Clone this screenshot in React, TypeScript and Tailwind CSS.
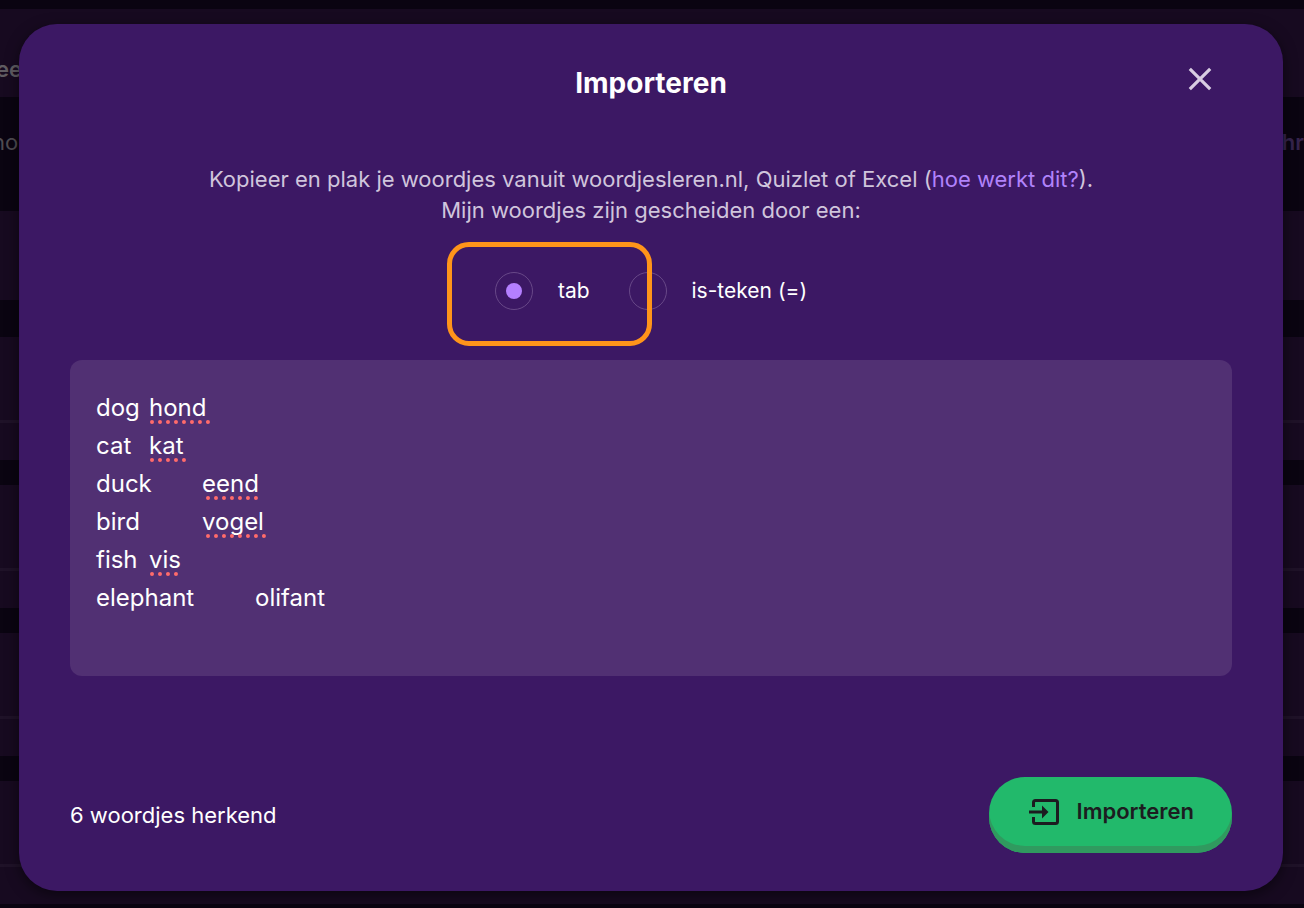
import { useState } from "react";

const initialText =
  "dog\thond\ncat\tkat\nduck\teend\nbird\t\tvogel\nfish\tvis\nelephant\t\tolifant\n";

// Spelling marks under unknown words, one entry per line of the text box.
const spellingMarks: ({ left: number; width: number } | null)[] = [
  { left: 54, width: 60 },
  { left: 54, width: 36 },
  { left: 110, width: 52 },
  { left: 110, width: 60 },
  { left: 54, width: 28 },
  null,
];

function WordCard() {
  return (
    <div className="mb-[25px] h-[123px] w-full shrink-0 bg-[#170a20] pt-[83px]">
      <div className="h-[3px] bg-[#1f1228]" />
    </div>
  );
}

function Backdrop() {
  return (
    <div
      aria-hidden="true"
      className="absolute inset-0 flex flex-col overflow-hidden bg-[#0a0411] pt-[9px]"
    >
      <div className="flex h-[88px] shrink-0 items-center bg-[#170a20] pt-8">
        <span className="-ml-1 text-[22px] leading-[30px] font-semibold text-[#605c62]">ee</span>
      </div>
      <div className="flex h-[114px] shrink-0 items-start justify-between pt-[30px] text-[22px] leading-[30px]">
        <span className="-ml-2 text-[#4f4c52]">no</span>
        <span className="font-semibold text-[#35244d]">hr</span>
      </div>
      <div className="mb-[37px] h-[89px] shrink-0 bg-[#170a20]" />
      <WordCard />
      <WordCard />
      <WordCard />
      <WordCard />
    </div>
  );
}

function SeparatorOption({
  label,
  value,
  selected,
  onSelect,
}: {
  label: string;
  value: string;
  selected: string;
  onSelect: (value: string) => void;
}) {
  return (
    <label className="flex cursor-pointer items-center gap-[25px]">
      <input
        type="radio"
        name="separator"
        value={value}
        checked={selected === value}
        onChange={() => onSelect(value)}
        className="grid size-[38px] appearance-none place-items-center rounded-full border border-[#684888] before:size-4 before:rounded-full before:bg-transparent checked:before:bg-[#b47fff]"
      />
      {label}
    </label>
  );
}

export default function App() {
  const [separator, setSeparator] = useState("tab");
  const [text, setText] = useState(initialText);
  const count = text.split("\n").filter((line) => line.trim() !== "").length;

  return (
    <div className="relative min-h-screen overflow-hidden pt-6 pr-[21px] pb-[17px] pl-[19px] font-[Inter,sans-serif]">
      <Backdrop />
      <main
        role="dialog"
        aria-labelledby="dialog-title"
        className="relative flex flex-col rounded-[38px] bg-[#3c1864] px-[51px] pt-[38px] pb-[38px] text-white shadow-[0_4px_14px_rgba(0,0,0,0.5)]"
      >
        <header className="grid grid-cols-[1fr_auto_1fr] items-center">
          <h1 id="dialog-title" className="col-start-2 text-[28px] leading-[42px] font-bold">
            Importeren
          </h1>
          <button type="button" aria-label="Sluiten" className="mr-5 mb-2 justify-self-end text-[#d8cde2]">
            <svg viewBox="0 0 24 24" className="size-6" fill="none" stroke="currentColor" strokeWidth="3.2">
              <path d="M1.800 1.800 22.200 22.200M22.200 1.800 1.800 22.200" />
            </svg>
          </button>
        </header>

        <p className="mt-[60px] text-center text-[22px] leading-[31px] text-[#d0c5dc]">
          Kopieer en plak je woordjes vanuit woordjesleren.nl, Quizlet of Excel (
          <a href="#uitleg" className="text-[#b183fb]">
            hoe werkt dit?
          </a>
          ).
          <br />
          Mijn woordjes zijn gescheiden door een:
        </p>

        <fieldset
          aria-label="Scheidingsteken"
          className="relative mt-[46px] flex justify-center gap-[39px] self-center text-[21px] leading-[38px]"
        >
          <SeparatorOption label="tab" value="tab" selected={separator} onSelect={setSeparator} />
          <SeparatorOption label="is-teken (=)" value="is" selected={separator} onSelect={setSeparator} />
          <div className="pointer-events-none absolute -top-[30px] -left-12 h-[104px] w-[205px] rounded-[22px] border-5 border-[#ff941a]" />
        </fieldset>

        <div className="relative mt-[50px]">
          <textarea
            aria-label="Woordjes"
            spellCheck={false}
            value={text}
            onChange={(event) => setText(event.target.value)}
            className="block h-[316px] w-full resize-none rounded-xl bg-[#513073] px-[26px] pt-[29px] pb-[30px] text-[24px] leading-[38px] text-white outline-none [tab-size:53px]"
          />
          <div aria-hidden="true" className="pointer-events-none absolute inset-0 px-[26px] pt-[29px]">
            {spellingMarks.map((mark, index) => (
              <div key={index} className="flex h-[38px] items-end pb-[3px]">
                {mark && (
                  <span
                    className="border-b-4 border-dotted border-[#ff6b6b]"
                    style={{ marginLeft: mark.left, width: mark.width }}
                  />
                )}
              </div>
            ))}
          </div>
        </div>

        <footer className="mt-[101px] flex items-center justify-between">
          <p className="text-[22px] leading-[30px]">{count} woordjes herkend</p>
          <button
            type="button"
            className="flex h-[76px] items-center gap-[18px] rounded-[36px] bg-[#22b96b] pr-[38px] pb-[7px] pl-10 text-[22px] font-semibold text-[#1c1c20] shadow-[inset_0_-7px_0_#309a5f]"
          >
            <svg viewBox="0 0 30 26" className="h-[26px] w-[30px]" fill="none" stroke="currentColor" strokeWidth="3">
              <path d="M4.500 8V3.500a2 2 0 0 1 2-2h20a2 2 0 0 1 2 2v19a2 2 0 0 1-2 2h-20a2 2 0 0 1-2-2V18" />
              <path d="M0 13h15" />
              <path d="M13 6.500v13l6.500-6.500z" fill="currentColor" stroke="none" />
            </svg>
            Importeren
          </button>
        </footer>
      </main>
    </div>
  );
}
